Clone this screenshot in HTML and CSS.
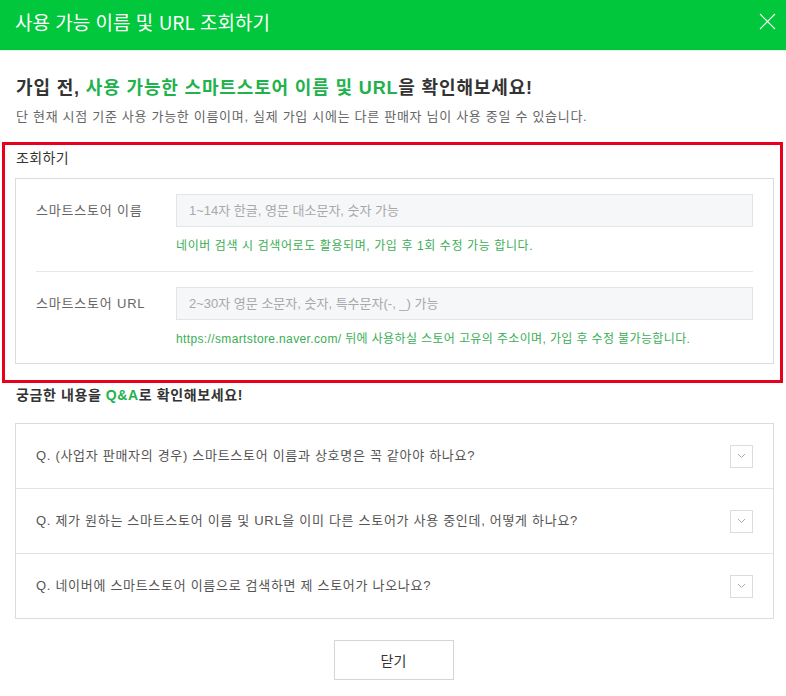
FILE: index.html
```html
<!DOCTYPE html>
<html lang="ko">
<head>
<meta charset="utf-8">
<title>사용 가능 이름 및 URL 조회하기</title>
<link rel="stylesheet" href="styles.css">
</head>
<body>
<div class="dialog">
  <header class="dlg-header">
    <h1 class="dlg-title">사용 가능 이름 및 URL 조회하기</h1>
    <button class="dlg-close" type="button" aria-label="닫기">
      <svg width="17" height="17" viewBox="0 0 17 17"><path d="M1 1L16 16M16 1L1 16" stroke="#fff" stroke-width="1.1" fill="none"/></svg>
    </button>
  </header>
  <main class="dlg-body">
    <section class="intro">
      <h2 class="intro-title">가입 전, <em>사용 가능한 스마트스토어 이름 및 URL</em>을 확인해보세요!</h2>
      <p class="intro-desc">단 현재 시점 기준 사용 가능한 이름이며, 실제 가입 시에는 다른 판매자 님이 사용 중일 수 있습니다.</p>
    </section>
    <section class="lookup">
      <h3 class="lookup-title">조회하기</h3>
      <div class="lookup-box">
        <div class="field">
          <label class="field-label">스마트스토어 이름</label>
          <div class="field-main">
            <input class="field-input" type="text" placeholder="1~14자 한글, 영문 대소문자, 숫자 가능">
            <p class="field-help">네이버 검색 시 검색어로도 활용되며, 가입 후 1회 수정 가능 합니다.</p>
          </div>
        </div>
        <div class="field">
          <label class="field-label">스마트스토어 URL</label>
          <div class="field-main">
            <input class="field-input" type="text" placeholder="2~30자 영문 소문자, 숫자, 특수문자(-, _) 가능">
            <p class="field-help field-help--url">https://smartstore.naver.com/ 뒤에 사용하실 스토어 고유의 주소이며, 가입 후 수정 불가능합니다.</p>
          </div>
        </div>
      </div>
    </section>
    <section class="qna">
      <h3 class="qna-title">궁금한 내용을 <em>Q&amp;A</em>로 확인해보세요!</h3>
      <ul class="qna-list">
        <li class="qna-item"><span class="qna-q">Q. (사업자 판매자의 경우) 스마트스토어 이름과 상호명은 꼭 같아야 하나요?</span><span class="qna-toggle"><svg width="9" height="6" viewBox="0 0 9 6"><path d="M1 1L4.5 4.5L8 1" stroke="#aaa" stroke-width="1" fill="none"/></svg></span></li>
        <li class="qna-item"><span class="qna-q">Q. 제가 원하는 스마트스토어 이름 및 URL을 이미 다른 스토어가 사용 중인데, 어떻게 하나요?</span><span class="qna-toggle"><svg width="9" height="6" viewBox="0 0 9 6"><path d="M1 1L4.5 4.5L8 1" stroke="#aaa" stroke-width="1" fill="none"/></svg></span></li>
        <li class="qna-item"><span class="qna-q">Q. 네이버에 스마트스토어 이름으로 검색하면 제 스토어가 나오나요?</span><span class="qna-toggle"><svg width="9" height="6" viewBox="0 0 9 6"><path d="M1 1L4.5 4.5L8 1" stroke="#aaa" stroke-width="1" fill="none"/></svg></span></li>
      </ul>
    </section>
    <div class="actions">
      <button class="btn-close" type="button">닫기</button>
    </div>
  </main>
</div>
</body>
</html>
```

FILE: styles.css
```css
* { box-sizing: border-box; }
html, body { margin: 0; padding: 0; background: #fff; }
body {
  font-family: "Liberation Sans", "Noto Sans CJK KR", sans-serif;
  color: #333;
  width: 786px;
}
h1, h2, h3, p, ul { margin: 0; padding: 0; }
em { font-style: normal; }

.dlg-header {
  height: 51px;
  background: #00c73c;
  border-bottom: 1px solid #dff5e5;
  display: flex;
  align-items: center;
  justify-content: space-between;
  padding: 0 10px 7px 15px;
}
.dlg-title {
  font-family: "Noto Sans CJK KR", sans-serif;
  font-weight: 400;
  font-size: 19px;
  line-height: 24px;
  color: #fff;
  letter-spacing: 0;
}
.dlg-close {
  background: none;
  border: 0;
  padding: 0;
  width: 17px;
  height: 17px;
  display: flex;
}

.dlg-body { padding: 0 3px 0 2px; }

.intro { padding: 24px 0 0 14px; }
.intro-title {
  font-size: 18px;
  line-height: 26px;
  font-weight: 700;
  color: #333;
  letter-spacing: 0.85px;
}
.intro-title em { color: #22b24c; }
.intro-desc {
  margin-top: 6px;
  font-size: 13px;
  line-height: 20px;
  color: #666;
  letter-spacing: 0.7px;
}

.lookup {
  margin-top: 15px;
  border: 3px solid #e8001c;
  padding: 3px 6px 16px 10px;
}
.lookup-title {
  font-size: 14px;
  line-height: 20px;
  font-weight: 400;
  color: #333;
  padding-left: 1px;
  letter-spacing: 0.4px;
}
.lookup-box {
  margin-top: 10px;
  border: 1px solid #dcdcdc;
  padding: 0 20px;
}
.field {
  display: flex;
  align-items: flex-start;
  padding: 15px 0 16px;
}
.field + .field {
  border-top: 1px solid #e6e6e6;
  padding-bottom: 15px;
}
.field-label {
  flex: 0 0 140px;
  font-size: 13px;
  line-height: 33px;
  color: #666;
  letter-spacing: 0.8px;
}
.field-main { flex: 1; }
.field-input {
  display: block;
  width: 100%;
  height: 33px;
  border: 1px solid #e1e4e8;
  background: #f6f7f9;
  padding: 0 12px;
  font-family: inherit;
  font-size: 13px;
  color: #333;
  outline: none;
}
.field-input::placeholder { color: #a8a8a8; }
.field-help {
  margin-top: 10px;
  font-size: 12px;
  line-height: 18px;
  color: #3aae56;
  letter-spacing: 0.6px;
}
.field-help--url { letter-spacing: 0.37px; }

.qna { padding-top: 2px; }
.qna-title {
  padding-left: 14px;
  font-size: 14px;
  line-height: 20px;
  font-weight: 700;
  color: #333;
  letter-spacing: 0.6px;
}
.qna-title em { color: #22b24c; }
.qna-list {
  list-style: none;
  margin: 18px 9px 0 13px;
  border: 1px solid #dcdcdc;
}
.qna-item {
  height: 64px;
  display: flex;
  align-items: center;
  justify-content: space-between;
  padding: 0 20px 0 20px;
}
.qna-item + .qna-item { border-top: 1px solid #e3e3e3; height: 65px; }
.qna-q {
  font-size: 13px;
  line-height: 20px;
  color: #555;
  letter-spacing: 0.7px;
}
.qna-toggle {
  width: 23px;
  height: 23px;
  border: 1px solid #dcdcdc;
  display: flex;
  align-items: center;
  justify-content: center;
}

.actions {
  display: flex;
  justify-content: center;
  padding-top: 21px;
}
.btn-close {
  width: 120px;
  height: 40px;
  border: 1px solid #d5d5d5;
  background: #fff;
  font-family: "Noto Sans CJK KR", sans-serif;
  font-size: 14px;
  color: #333;
  margin-left: 2px;
}
```
